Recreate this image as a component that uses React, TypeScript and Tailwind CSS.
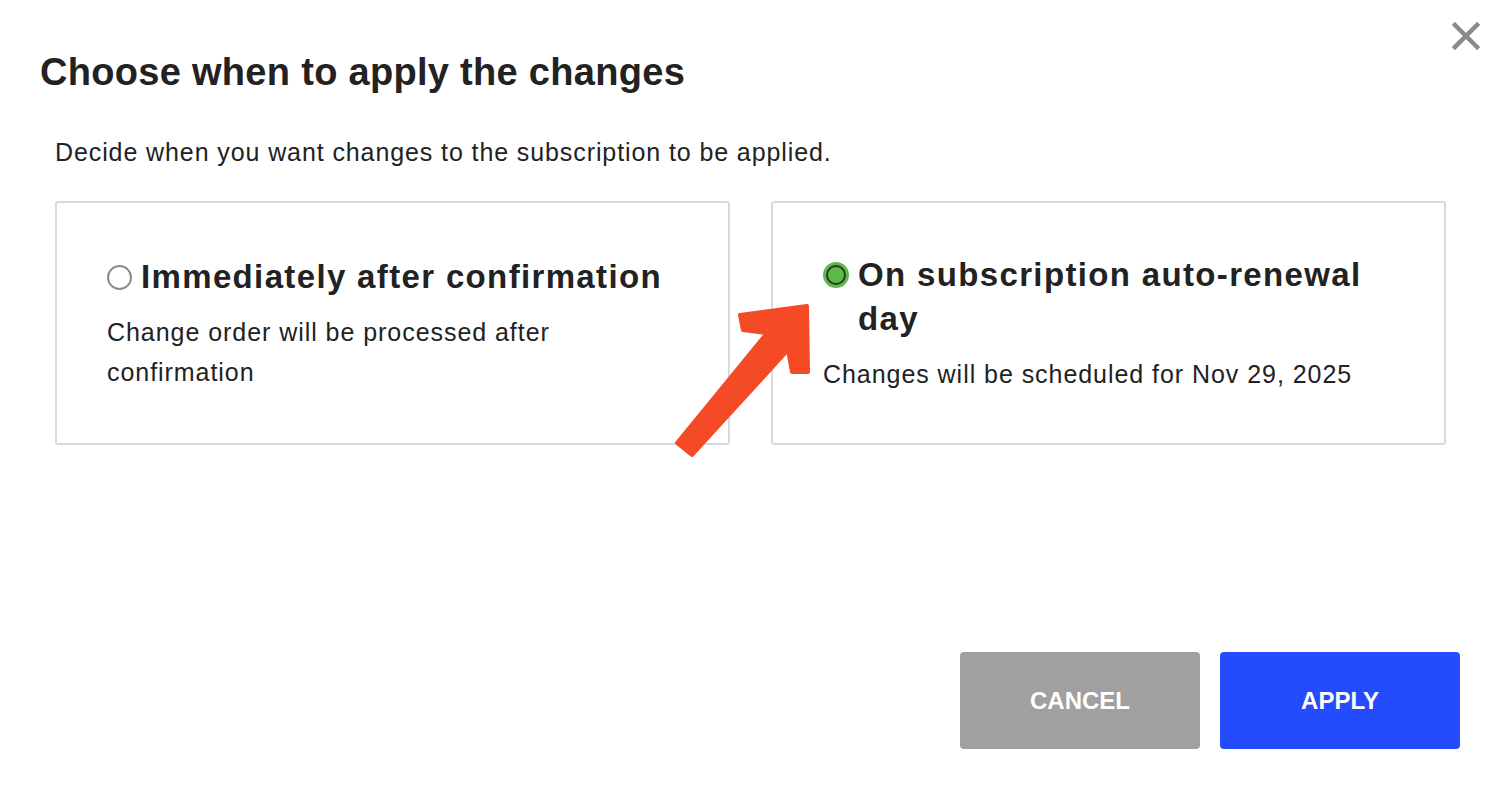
import React, { useState } from 'react';

type Option = 'now' | 'renewal';

const Radio: React.FC<{ checked: boolean }> = ({ checked }) =>
    checked ? (
        <span className="mt-[9px] flex h-[26px] w-[26px] shrink-0 items-center justify-center rounded-full bg-[#5cbb47]">
            <span className="h-[20px] w-[20px] rounded-full border-[2.5px] border-[#333333] bg-[#5cbb47]" />
        </span>
    ) : (
        <span className="mt-[10px] h-[25px] w-[25px] shrink-0 rounded-full border-2 border-[#8a8a8a] bg-white" />
    );

const OptionCard: React.FC<{
    checked: boolean;
    title: string;
    description: string;
    onSelect: () => void;
    descClass?: string;
}> = ({ checked, title, description, onSelect, descClass }) => (
    <button
        onClick={onSelect}
        className="flex h-[244px] flex-1 flex-col justify-center rounded-[3px] border-2 border-[#d9d9d9] bg-white pl-[50px] pr-[40px] text-left"
    >
        <div className="flex items-start gap-[9px]">
            <Radio checked={checked} />
            <span className="text-[33px] font-bold leading-[44px] tracking-[1.35px] text-[#222222]">{title}</span>
        </div>
        <p className={`mt-[13px] text-[25px] leading-[40px] tracking-[0.95px] text-[#222222] ${descClass ?? ''}`}>
            {description}
        </p>
    </button>
);

export default function App() {
    const [choice, setChoice] = useState<Option>('renewal');

    return (
        <div
            className="relative flex h-[796px] w-[1508px] flex-col bg-white"
            style={{ fontFamily: '"Liberation Sans", Arial, sans-serif' }}
        >
            {/* close */}
            <button className="absolute right-[28px] top-[22px] text-[#8a8a8a]" aria-label="Close">
                <svg width="28" height="28" viewBox="0 0 28 28">
                    <path d="M3 3 L25 25 M25 3 L3 25" stroke="currentColor" strokeWidth="4.5" strokeLinecap="square" />
                </svg>
            </button>

            <h1 className="pl-[40px] pt-[50px] text-[38px] font-bold leading-[44px] tracking-[0.3px] text-[#222222]">
                Choose when to apply the changes
            </h1>

            <p className="pl-[55px] pt-[42px] text-[25px] leading-[32px] tracking-[0.9px] text-[#222222]">
                Decide when you want changes to the subscription to be applied.
            </p>

            <div className="mt-[33px] flex gap-[41px] pl-[55px] pr-[62px]">
                <OptionCard
                    checked={choice === 'now'}
                    title="Immediately after confirmation"
                    description="Change order will be processed after confirmation"
                    onSelect={() => setChoice('now')}
                    descClass="max-w-[470px]"
                />
                <OptionCard
                    checked={choice === 'renewal'}
                    title="On subscription auto-renewal day"
                    description="Changes will be scheduled for Nov 29, 2025"
                    onSelect={() => setChoice('renewal')}
                />
            </div>

            <div className="mt-auto flex justify-end gap-[20px] pb-[47px] pr-[48px]">
                <button className="h-[97px] w-[240px] rounded-[4px] bg-[#a0a0a0] text-[24px] font-bold text-white">
                    CANCEL
                </button>
                <button className="h-[97px] w-[240px] rounded-[4px] bg-[#254bfe] text-[24px] font-bold text-white">
                    APPLY
                </button>
            </div>

            {/* annotation arrow */}
            <svg className="pointer-events-none absolute left-0 top-0" width="1508" height="796">
                <polygon
                    points="740,315 807,306 808,372 792,372 788,350 692,455 677,443 767,333 743,330"
                    fill="#f44a26"
                    stroke="#f44a26"
                    strokeWidth="4"
                    strokeLinejoin="round"
                />
            </svg>
        </div>
    );
}
